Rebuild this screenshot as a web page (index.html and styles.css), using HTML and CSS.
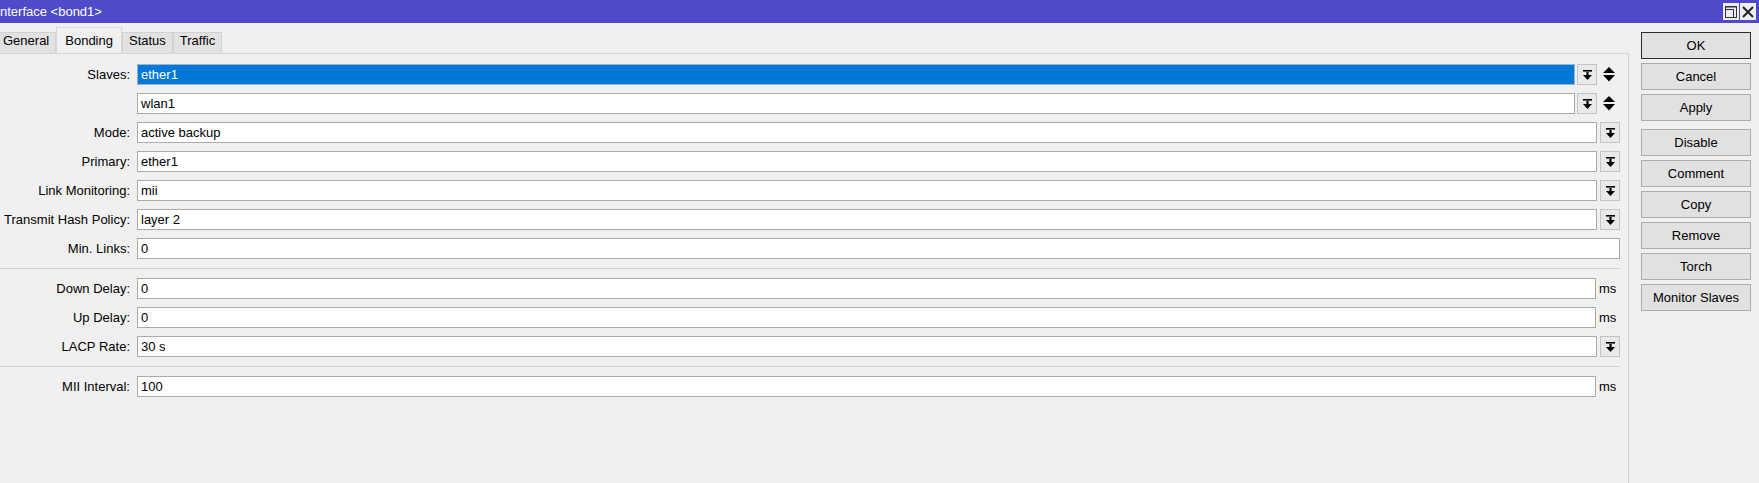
FILE: index.html
```html
<!DOCTYPE html>
<html>
<head>
<meta charset="utf-8">
<link rel="stylesheet" href="styles.css">
</head>
<body>
<div class="window">
  <div class="titlebar">
    <span class="title">nterface &lt;bond1&gt;</span>
    <div class="wbtns">
      <span class="wbtn"><svg width="16" height="16" viewBox="0 0 16 16"><rect x="2.5" y="2.5" width="11" height="11" fill="none" stroke="#333"/><rect x="2.5" y="5.5" width="8" height="8" fill="none" stroke="#333"/><rect x="2.5" y="2.5" width="11" height="1" fill="#333"/></svg></span>
      <span class="wbtn"><svg width="16" height="16" viewBox="0 0 16 16"><path d="M3 3L13 13M13 3L3 13" stroke="#222" stroke-width="2"/></svg></span>
    </div>
  </div>
  <div class="main">
    <div class="left">
      <div class="tabs">
        <div class="tab first">General</div>
        <div class="tab active">Bonding</div>
        <div class="tab">Status</div>
        <div class="tab">Traffic</div>
      </div>
      <div class="panel">
        <div class="row">
          <div class="label">Slaves:</div>
          <div class="field">
            <div class="input sel">ether1</div>
            <div class="dd slim"><svg width="9" height="10" viewBox="0 0 9 10"><rect x="0" y="0" width="9" height="1.6" fill="#000"/><rect x="3.4" y="2" width="2.2" height="3.5" fill="#000"/><path d="M0 5H9L4.5 10Z" fill="#000"/></svg></div>
            <div class="updown"><svg width="12" height="15" viewBox="0 0 12 15"><path d="M0 6L6 0L12 6Z" fill="#000"/><path d="M0 8H12L6 14.5Z" fill="#000"/></svg></div>
          </div>
        </div>
        <div class="row">
          <div class="label"></div>
          <div class="field">
            <div class="input">wlan1</div>
            <div class="dd slim"><svg width="9" height="10" viewBox="0 0 9 10"><rect x="0" y="0" width="9" height="1.6" fill="#000"/><rect x="3.4" y="2" width="2.2" height="3.5" fill="#000"/><path d="M0 5H9L4.5 10Z" fill="#000"/></svg></div>
            <div class="updown"><svg width="12" height="15" viewBox="0 0 12 15"><path d="M0 6L6 0L12 6Z" fill="#000"/><path d="M0 8H12L6 14.5Z" fill="#000"/></svg></div>
          </div>
        </div>
        <div class="row">
          <div class="label">Mode:</div>
          <div class="field">
            <div class="input">active backup</div>
            <div class="dd"><svg width="9" height="10" viewBox="0 0 9 10"><rect x="0" y="0" width="9" height="1.6" fill="#000"/><rect x="3.4" y="2" width="2.2" height="3.5" fill="#000"/><path d="M0 5H9L4.5 10Z" fill="#000"/></svg></div>
          </div>
        </div>
        <div class="row">
          <div class="label">Primary:</div>
          <div class="field">
            <div class="input">ether1</div>
            <div class="dd"><svg width="9" height="10" viewBox="0 0 9 10"><rect x="0" y="0" width="9" height="1.6" fill="#000"/><rect x="3.4" y="2" width="2.2" height="3.5" fill="#000"/><path d="M0 5H9L4.5 10Z" fill="#000"/></svg></div>
          </div>
        </div>
        <div class="row">
          <div class="label">Link Monitoring:</div>
          <div class="field">
            <div class="input">mii</div>
            <div class="dd"><svg width="9" height="10" viewBox="0 0 9 10"><rect x="0" y="0" width="9" height="1.6" fill="#000"/><rect x="3.4" y="2" width="2.2" height="3.5" fill="#000"/><path d="M0 5H9L4.5 10Z" fill="#000"/></svg></div>
          </div>
        </div>
        <div class="row">
          <div class="label">Transmit Hash Policy:</div>
          <div class="field">
            <div class="input">layer 2</div>
            <div class="dd"><svg width="9" height="10" viewBox="0 0 9 10"><rect x="0" y="0" width="9" height="1.6" fill="#000"/><rect x="3.4" y="2" width="2.2" height="3.5" fill="#000"/><path d="M0 5H9L4.5 10Z" fill="#000"/></svg></div>
          </div>
        </div>
        <div class="row">
          <div class="label">Min. Links:</div>
          <div class="field">
            <div class="input">0</div>
          </div>
        </div>
        <div class="sep"></div>
        <div class="row">
          <div class="label">Down Delay:</div>
          <div class="field">
            <div class="input">0</div>
            <div class="unit">ms</div>
          </div>
        </div>
        <div class="row">
          <div class="label">Up Delay:</div>
          <div class="field">
            <div class="input">0</div>
            <div class="unit">ms</div>
          </div>
        </div>
        <div class="row">
          <div class="label">LACP Rate:</div>
          <div class="field">
            <div class="input">30 s</div>
            <div class="dd"><svg width="9" height="10" viewBox="0 0 9 10"><rect x="0" y="0" width="9" height="1.6" fill="#000"/><rect x="3.4" y="2" width="2.2" height="3.5" fill="#000"/><path d="M0 5H9L4.5 10Z" fill="#000"/></svg></div>
          </div>
        </div>
        <div class="sep"></div>
        <div class="row">
          <div class="label">MII Interval:</div>
          <div class="field">
            <div class="input">100</div>
            <div class="unit">ms</div>
          </div>
        </div>
      </div>
    </div>
    <div class="actions">
      <div class="btn default">OK</div>
      <div class="btn">Cancel</div>
      <div class="btn">Apply</div>
      <div class="btn group">Disable</div>
      <div class="btn">Comment</div>
      <div class="btn">Copy</div>
      <div class="btn">Remove</div>
      <div class="btn">Torch</div>
      <div class="btn">Monitor Slaves</div>
    </div>
  </div>
</div>
</body>
</html>
```

FILE: styles.css
```css
html, body {
  margin: 0;
  padding: 0;
}
body {
  background: #f0f0f0;
  font: 13px "Liberation Sans", Arial, sans-serif;
  color: #000;
  overflow: hidden;
}
.window {
  width: 1759px;
  height: 483px;
  display: flex;
  flex-direction: column;
}
.titlebar {
  flex: none;
  height: 23px;
  background: #4f4bc8;
  color: #fff;
  display: flex;
  align-items: center;
  justify-content: space-between;
}
.title {
  line-height: 23px;
  white-space: nowrap;
}
.wbtns {
  display: flex;
  gap: 1px;
  margin-right: 3px;
}
.wbtn {
  width: 16px;
  height: 17px;
  background: #ececf2;
  display: flex;
  align-items: center;
  justify-content: center;
}
.main {
  flex: 1;
  display: flex;
  min-height: 0;
}
.left {
  width: 1629px;
  flex: none;
  display: flex;
  flex-direction: column;
}
.tabs {
  flex: none;
  height: 30px;
  display: flex;
  align-items: flex-end;
}
.tab {
  height: 21px;
  box-sizing: border-box;
  padding: 0 6px;
  line-height: 16px;
  background: #e2e2e2;
  border: 1px solid #d2d2d2;
  border-bottom: none;
  white-space: nowrap;
}
.tab.first {
  margin-left: -4px;
}
.tab.active {
  height: 26px;
  padding: 5px 8px 0;
  background: #f0f0f0;
  border-color: #d8d8d8;
}
.panel {
  flex: 1;
  box-sizing: border-box;
  border-top: 1px solid #d6d6d6;
  border-right: 1px solid #d0d0d0;
  padding: 10px 8px 0 0;
  display: flex;
  flex-direction: column;
}
.row {
  flex: none;
  display: flex;
  align-items: center;
  height: 21px;
  margin-bottom: 8px;
}
.label {
  flex: none;
  width: 130px;
  margin-right: 7px;
  text-align: right;
  white-space: nowrap;
}
.field {
  flex: 1;
  display: flex;
  align-items: center;
  min-width: 0;
}
.input {
  flex: 1;
  min-width: 0;
  height: 21px;
  box-sizing: border-box;
  border: 1px solid #ababab;
  background: #fff;
  padding: 0 3px;
  line-height: 19px;
  white-space: nowrap;
  overflow: hidden;
}
.input.sel {
  background: #0078d7;
  color: #fff;
  border-color: #9ab4cc;
}
.dd {
  flex: none;
  width: 20px;
  height: 21px;
  box-sizing: border-box;
  margin-left: 3px;
  border: 1px solid #c4c4c4;
  background: #e9e9e9;
  display: flex;
  align-items: center;
  justify-content: center;
}
.dd.slim {
  margin-left: 2px;
}
.updown {
  flex: none;
  width: 23px;
  box-sizing: border-box;
  padding-left: 6px;
  display: flex;
  align-items: center;
}
.unit {
  flex: none;
  width: 21px;
  margin-left: 3px;
  white-space: nowrap;
}
.sep {
  flex: none;
  height: 0;
  border-top: 1px solid #d2d2d2;
  margin: 1px 0 9px;
}
.actions {
  flex: none;
  width: 110px;
  margin-left: 12px;
  padding-top: 9px;
  display: flex;
  flex-direction: column;
  gap: 4px;
}
.btn {
  height: 27px;
  box-sizing: border-box;
  border: 1px solid #adadad;
  background: #e1e1e1;
  display: flex;
  align-items: center;
  justify-content: center;
  white-space: nowrap;
}
.btn.default {
  border-color: #2b2b2b;
}
.btn.group {
  margin-top: 4px;
}
```
